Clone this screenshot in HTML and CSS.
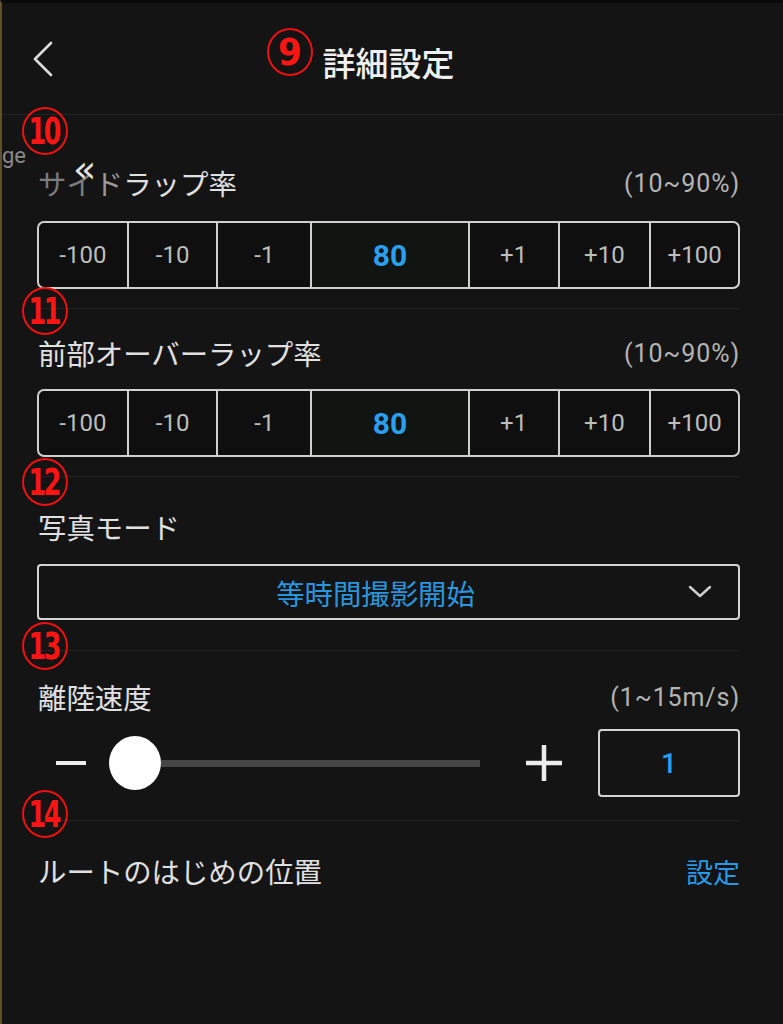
FILE: index.html
```html
<!DOCTYPE html>
<html lang="ja">
<head>
<meta charset="utf-8">
<title>詳細設定</title>
<link rel="stylesheet" href="styles.css">
</head>
<body>
<div class="page">
  <header class="header">
    <svg class="back" width="22" height="36" viewBox="0 0 22 36"><polyline points="19,2 3,18 19,34" fill="none" stroke="#dcdcdc" stroke-width="2.6" stroke-linecap="round" stroke-linejoin="round"/></svg>
    <h1 class="title">詳細設定</h1>
  </header>

  <section class="sec sec1">
    <div class="row">
      <span class="label"><span class="fade1">サイ</span><span class="fade2">ド</span>ラップ率</span>
      <span class="range">(10~90%)</span>
    </div>
    <div class="stepper">
      <div class="cell">-100</div><div class="cell">-10</div><div class="cell">-1</div>
      <div class="cell val">80</div>
      <div class="cell">+1</div><div class="cell">+10</div><div class="cell">+100</div>
    </div>
  </section>

  <section class="sec sec2">
    <div class="row">
      <span class="label">前部オーバーラップ率</span>
      <span class="range">(10~90%)</span>
    </div>
    <div class="stepper">
      <div class="cell">-100</div><div class="cell">-10</div><div class="cell">-1</div>
      <div class="cell val">80</div>
      <div class="cell">+1</div><div class="cell">+10</div><div class="cell">+100</div>
    </div>
  </section>

  <section class="sec sec3">
    <div class="row"><span class="label">写真モード</span></div>
    <div class="select">
      <span class="select-text">等時間撮影開始</span>
      <svg class="chev" width="24" height="14" viewBox="0 0 24 14"><polyline points="2,2 12,11 22,2" fill="none" stroke="#cfcfcf" stroke-width="2.4" stroke-linecap="round" stroke-linejoin="round"/></svg>
    </div>
  </section>

  <section class="sec sec4">
    <div class="row">
      <span class="label">離陸速度</span>
      <span class="range">(1~15m/s)</span>
    </div>
    <div class="slider-row">
      <span class="minus"></span>
      <span class="thumb"></span>
      <span class="track"></span>
      <svg class="plus" width="36" height="36" viewBox="0 0 36 36"><path d="M18 0V36M0 18H36" stroke="#ececec" stroke-width="4.5"/></svg>
      <div class="numbox">1</div>
    </div>
  </section>

  <section class="sec sec5">
    <div class="row">
      <span class="label">ルートのはじめの位置</span>
      <span class="link">設定</span>
    </div>
  </section>

  <span class="ghost-ge">ge</span>
  <span class="ghost-arrow">«</span>

  <span class="anno a9"><span class="d1">9</span></span>
  <span class="anno a10"><span class="d2">10</span></span>
  <span class="anno a11"><span class="d2">11</span></span>
  <span class="anno a12"><span class="d2">12</span></span>
  <span class="anno a13"><span class="d2">13</span></span>
  <span class="anno a14"><span class="d2">14</span></span>
</div>
</body>
</html>
```

FILE: styles.css
```css
html, body {
  margin: 0;
  padding: 0;
  background: #141414;
}
body {
  font-family: "Roboto", "Noto Sans CJK JP", sans-serif;
  color: #e2e2e2;
}
.page {
  position: relative;
  width: 783px;
  height: 1024px;
  overflow: hidden;
  box-sizing: border-box;
  border-left: 2px solid #5e5030;
  border-top: 3px solid #0b0b0b;
  background: #141414;
}
.header {
  height: 111px;
  border-bottom: 1px solid #242424;
  display: flex;
  align-items: center;
  justify-content: center;
  position: relative;
}
.back {
  position: absolute;
  left: 30px;
  top: 38px;
}
.title {
  margin: 0;
  font-family: "Noto Sans CJK JP", sans-serif;
  font-size: 33px;
  font-weight: 500;
  color: #f0f0f0;
  line-height: 40px;
  margin-top: 6px;
  margin-left: -8px;
}
.sec {
  margin: 0 43px 0 35px;
  border-bottom: 1px solid #222;
}
.row {
  display: flex;
  justify-content: space-between;
  align-items: center;
  height: 34px;
}
.label {
  font-family: "Noto Sans CJK JP", sans-serif;
  font-size: 28.4px;
  line-height: 34px;
  color: #e0e0e0;
  margin-left: 1px;
}
.fade1 { color: #7c7c7c; }
.fade2 { color: #9a9a9a; }
.range {
  font-size: 25px;
  letter-spacing: 0.9px;
  color: #b4b4b4;
}
.link {
  font-family: "Noto Sans CJK JP", sans-serif;
  font-size: 27px;
  color: #2a98e6;
}
.sec1 { padding: 51px 0 19px; }
.sec1 .stepper { margin-top: 21px; }
.sec2 { padding: 27px 0 19px; }
.sec2 .stepper { margin-top: 19px; }
.sec3 { padding: 33px 0 30px; }
.sec4 { padding: 29px 0 23px; }
.sec5 { padding: 33px 0 0; border-bottom: none; }

.stepper {
  display: grid;
  grid-template-columns: 88fr 90fr 94fr 158fr 90fr 92fr 89fr;
  height: 68px;
  box-sizing: border-box;
  border: 2px solid #d0d0d0;
  border-radius: 7px;
  overflow: hidden;
  background: #0f0f0f;
}
.cell {
  display: flex;
  align-items: center;
  justify-content: center;
  font-size: 24px;
  color: #bdbdbd;
  border-left: 2px solid #d0d0d0;
}
.cell:first-child { border-left: none; }
.cell.val {
  background: #111511;
  color: #2a9ff0;
  font-size: 30px;
  font-weight: 700;
}

.select {
  margin-top: 20px;
  height: 56px;
  box-sizing: border-box;
  border: 2px solid #d4d4d4;
  border-radius: 4px;
  display: flex;
  align-items: center;
  justify-content: center;
  position: relative;
  padding-right: 26px;
}
.select-text {
  font-family: "Noto Sans CJK JP", sans-serif;
  font-size: 28.4px;
  color: #2a95dd;
}
.chev {
  position: absolute;
  right: 26px;
  top: 19px;
}

.slider-row {
  margin-top: 15px;
  height: 68px;
  display: flex;
  align-items: center;
}
.minus {
  width: 30px;
  height: 4px;
  background: #ececec;
  margin-left: 19px;
  margin-right: 23px;
}
.thumb {
  width: 52px;
  height: 54px;
  border-radius: 50%;
  background: #ffffff;
  flex: none;
}
.track {
  width: 319px;
  height: 7px;
  background: #464646;
  margin-right: 46px;
}
.plus {
  flex: none;
  margin-right: 36px;
}
.numbox {
  width: 142px;
  height: 68px;
  box-sizing: border-box;
  border: 2px solid #d4d4d4;
  border-radius: 4px;
  display: flex;
  align-items: center;
  justify-content: center;
  font-size: 28px;
  font-weight: 500;
  color: #2a9ff0;
}

.ghost-ge {
  position: absolute;
  left: 0;
  top: 140px;
  font-family: "Roboto", sans-serif;
  font-size: 22px;
  color: #8a8a8a;
}
.ghost-arrow {
  position: absolute;
  left: 71px;
  top: 146px;
  font-family: "DejaVu Sans", sans-serif;
  font-size: 38px;
  line-height: 40px;
  color: #e4e4e4;
}

.anno {
  position: absolute;
  width: 42px;
  height: 44px;
  border: 2px solid #f01010;
  border-radius: 50%;
  display: flex;
  align-items: center;
  justify-content: center;
  color: #ff1414;
  font-family: "DejaVu Sans Condensed", "DejaVu Sans", sans-serif;
  font-weight: 700;
}
.d1 { font-size: 38px; line-height: 1; }
.d2 {
  font-size: 38px;
  line-height: 1;
  letter-spacing: -3px;
  transform: scaleX(0.74);
  margin-left: -3px;
}
.a9 { left: 265px; top: 25px; }
.a10 { left: 20px; top: 104px; }
.a11 { left: 20px; top: 284px; }
.a12 { left: 20px; top: 455px; }
.a13 { left: 20px; top: 619px; }
.a14 { left: 20px; top: 787px; }
```
